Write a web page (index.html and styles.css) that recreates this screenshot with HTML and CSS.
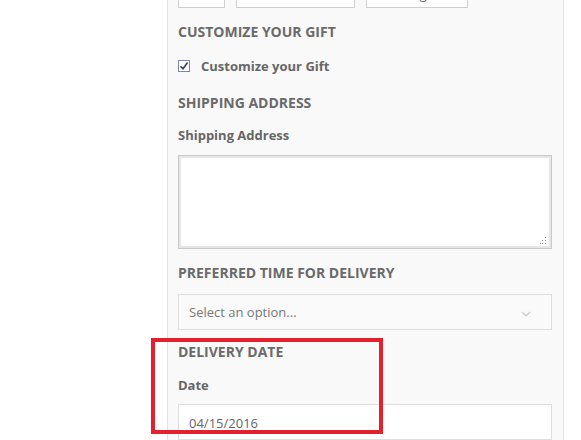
FILE: index.html
```html
<!DOCTYPE html>
<html lang="en">
  <head>
    <meta charset="UTF-8" />
    <meta name="viewport" content="width=device-width, initial-scale=1.0" />
    <title>Checkout fields</title>
    <link rel="stylesheet" href="styles.css">
  </head>
  <body>
    <div class="side"></div>
    <div class="panel">
      <div class="options">
        <div class="opt opt-sm"></div>
        <div class="opt opt-md"></div>
        <div class="opt opt-lg">Large</div>
      </div>

      <h3 class="heading h-gift">CUSTOMIZE YOUR GIFT</h3>
      <label class="check">
        <span class="box">
          <svg width="10" height="10" viewBox="0 0 10 10"><path d="M1.5 5.2 L4 7.8 L8.6 1.6" fill="none" stroke="#2c3e74" stroke-width="1.6"/></svg>
        </span>
        Customize your Gift
      </label>

      <h3 class="heading h-ship">SHIPPING ADDRESS</h3>
      <div class="label l-ship">Shipping Address</div>
      <div class="textarea">
        <svg class="grip" width="7" height="7" viewBox="0 0 7 7">
          <rect x="5" y="0" width="1" height="1" fill="#999"/>
          <rect x="5" y="3" width="1" height="1" fill="#999"/>
          <rect x="2" y="3" width="1" height="1" fill="#999"/>
          <rect x="5" y="6" width="1" height="1" fill="#999"/>
          <rect x="2" y="6" width="1" height="1" fill="#999"/>
          <rect x="0" y="6" width="1" height="1" fill="#999"/>
        </svg>
      </div>

      <h3 class="heading h-time">PREFERRED TIME FOR DELIVERY</h3>
      <div class="select">
        <span>Select an option...</span>
        <svg width="10" height="6" viewBox="0 0 10 6"><path d="M1 1 L5 5 L9 1" fill="none" stroke="#c8c8c8" stroke-width="1.2"/></svg>
      </div>

      <div class="delivery">
        <div class="highlight"></div>
        <h3 class="heading">DELIVERY DATE</h3>
        <div class="label l-date">Date</div>
        <div class="input">04/15/2016</div>
      </div>
    </div>
  </body>
</html>
```

FILE: styles.css
```css
body {
  margin: 0;
  display: flex;
  font-family: "Open Sans", Arial, sans-serif;
  color: #666;
  background: #fff;
  overflow: hidden;
  height: 440px;
}

.side {
  width: 167px;
  flex-shrink: 0;
}

.panel {
  width: 374px;
  padding: 0 11px 0 10px;
  background: #f9f9f9;
  border-left: 1px solid #e2e2e2;
  border-right: 1px solid #e2e2e2;
  flex-shrink: 0;
}

.options {
  display: flex;
  gap: 11px;
  margin-top: -26px;
  height: 34px;
}
.opt {
  box-sizing: border-box;
  height: 34px;
  border: 1px solid #cfcfcf;
  background: #fff;
  font-size: 13px;
  text-align: center;
  line-height: 38px;
  color: #666;
}
.opt-sm {
  width: 47px;
}
.opt-md {
  width: 119px;
}
.opt-lg {
  width: 102px;
}

.heading {
  margin: 0;
  font-size: 14px;
  font-weight: 700;
  line-height: 20px;
  color: #6a6a6a;
}
.h-gift {
  margin-top: 14px;
}
.h-ship {
  margin-top: 17px;
}
.h-time {
  margin-top: 14px;
}

.check {
  display: flex;
  align-items: center;
  margin-top: 14px;
  font-size: 13px;
  font-weight: 700;
  line-height: 20px;
  color: #666;
}
.box {
  box-sizing: border-box;
  width: 12px;
  height: 12px;
  border: 1px solid #7c88a8;
  background: #fff;
  display: flex;
  align-items: center;
  justify-content: center;
  margin-right: 11px;
}

.label {
  font-size: 13px;
  font-weight: 700;
  line-height: 20px;
  color: #666;
}
.l-ship {
  margin-top: 12px;
}
.l-date {
  margin-top: 13px;
}

.textarea {
  box-sizing: border-box;
  margin-top: 10px;
  height: 94px;
  background: #fff;
  border: 1px solid #c9c9c9;
  box-shadow: inset 0 0 0 2px #e6e6e6;
  display: flex;
  align-items: flex-end;
  justify-content: flex-end;
  padding: 0 4px 4px 0;
}

.select {
  box-sizing: border-box;
  margin-top: 11px;
  height: 36px;
  border: 1px solid #dedede;
  background: #fafafa;
  display: flex;
  align-items: center;
  justify-content: space-between;
  padding: 0 20px 0 10px;
  font-size: 13px;
  color: #777;
}
.select svg {
  margin-top: 4px;
}

.delivery {
  position: relative;
  margin-top: 12px;
}
.highlight {
  position: absolute;
  top: -4px;
  left: -27px;
  width: 232px;
  height: 96px;
  box-sizing: border-box;
  border: 4px solid #e3202b;
  z-index: 2;
}

.input {
  box-sizing: border-box;
  margin-top: 9px;
  height: 36px;
  border: 1px solid #dedede;
  background: #fff;
  padding: 0 10px;
  font-size: 13px;
  line-height: 36px;
  color: #666;
}
```
